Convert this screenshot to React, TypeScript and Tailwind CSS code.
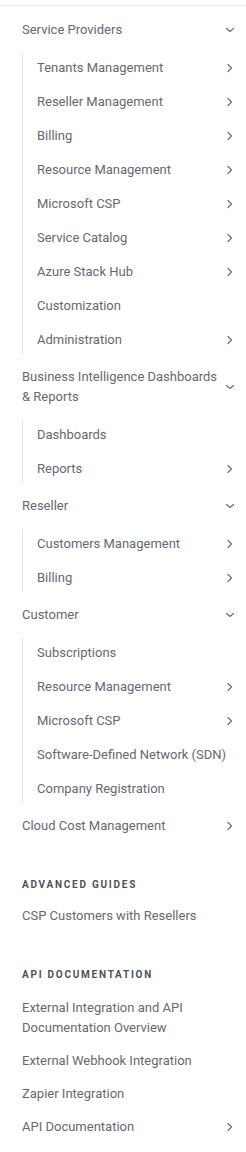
import React from "react";

type Item = { label: string; chevron?: boolean };
type Group = { label: string; kind: "group" | "link"; chevron?: boolean; children?: Item[] };

const ChevronRight = () => (
  <svg width="16" height="16" viewBox="0 0 16 16" className="shrink-0">
    <polyline points="6,4.5 9.5,8 6,11.5" fill="none" stroke="#6b707a" strokeWidth="1.2" strokeLinecap="round" strokeLinejoin="round" />
  </svg>
);
const ChevronDown = () => (
  <svg width="16" height="16" viewBox="0 0 16 16" className="shrink-0">
    <polyline points="4.5,6.5 8,9.5 11.5,6.5" fill="none" stroke="#6b707a" strokeWidth="1.2" strokeLinecap="round" strokeLinejoin="round" />
  </svg>
);

const groups: Group[] = [
  {
    label: "Service Providers",
    kind: "group",
    children: [
      { label: "Tenants Management", chevron: true },
      { label: "Reseller Management", chevron: true },
      { label: "Billing", chevron: true },
      { label: "Resource Management", chevron: true },
      { label: "Microsoft CSP", chevron: true },
      { label: "Service Catalog", chevron: true },
      { label: "Azure Stack Hub", chevron: true },
      { label: "Customization" },
      { label: "Administration", chevron: true },
    ],
  },
  {
    label: "Business Intelligence Dashboards & Reports",
    kind: "group",
    children: [{ label: "Dashboards" }, { label: "Reports", chevron: true }],
  },
  {
    label: "Reseller",
    kind: "group",
    children: [
      { label: "Customers Management", chevron: true },
      { label: "Billing", chevron: true },
    ],
  },
  {
    label: "Customer",
    kind: "group",
    children: [
      { label: "Subscriptions" },
      { label: "Resource Management", chevron: true },
      { label: "Microsoft CSP", chevron: true },
      { label: "Software-Defined Network (SDN)" },
      { label: "Company Registration" },
    ],
  },
  { label: "Cloud Cost Management", kind: "link", chevron: true },
];

const Row = ({ label, icon }: { label: string; icon?: React.ReactNode }) => (
  <div className="flex items-center py-[6.5px] pr-[8px]">
    <span className="flex-1 text-[13px] leading-[20px] text-[#646975]">{label}</span>
    {icon ?? <span className="w-4" />}
  </div>
);

export default function App() {
  return (
    <div
      className="w-[246px] bg-white border-t border-[#eceef1] mt-[5px] pl-[22px] pt-[7.5px] pb-[7px]"
      style={{ fontFamily: "Roboto, 'Liberation Sans', sans-serif" }}
    >
      <ul>
        {groups.map((g, i) => (
          <li key={i}>
            {g.kind === "group" ? (
              <>
                <Row label={g.label} icon={<ChevronDown />} />
                <ul className="relative my-1 before:absolute before:left-0 before:top-[2.5px] before:bottom-[2.5px] before:w-px before:bg-[#dfe2e7]">
                  {g.children!.map((c, j) => (
                    <li key={j} className="pl-[15px]">
                      <div className="flex items-center py-[7px] pr-[8px]">
                        <span className="flex-1 whitespace-nowrap text-[13px] leading-[20px] text-[#646975]">{c.label}</span>
                        {c.chevron ? <ChevronRight /> : null}
                      </div>
                    </li>
                  ))}
                </ul>
              </>
            ) : (
              <Row label={g.label} icon={g.chevron ? <ChevronRight /> : undefined} />
            )}
          </li>
        ))}
      </ul>

      <div className="mt-[34.5px] mb-[6.5px] text-[10px] leading-[16px] font-bold tracking-[1.75px] uppercase text-[#4d525c]">
        Advanced Guides
      </div>
      <ul>
        <li>
          <Row label="CSP Customers with Resellers" />
        </li>
      </ul>

      <div className="mt-[34.5px] mb-[8.5px] text-[10px] leading-[16px] font-bold tracking-[1.75px] uppercase text-[#4d525c]">
        API Documentation
      </div>
      <ul>
        <li>
          <Row label="External Integration and API Documentation Overview" />
        </li>
        <li>
          <Row label="External Webhook Integration" />
        </li>
        <li>
          <Row label="Zapier Integration" />
        </li>
        <li>
          <Row label="API Documentation" icon={<ChevronRight />} />
        </li>
      </ul>
    </div>
  );
}
